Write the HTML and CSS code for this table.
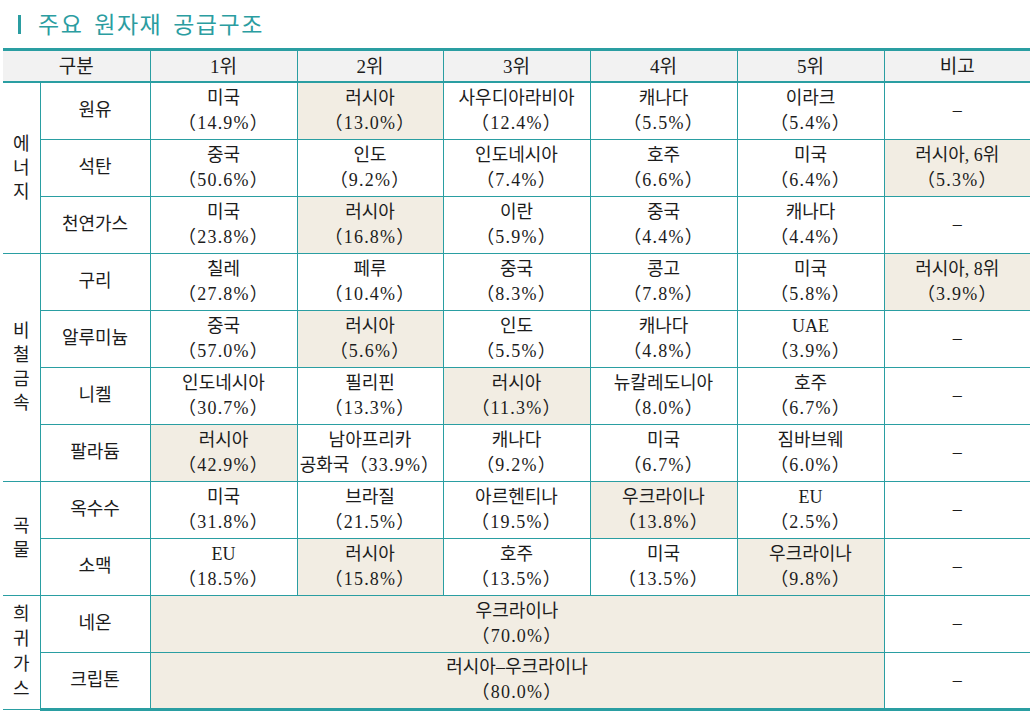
FILE: index.html
```html
<!DOCTYPE html>
<html lang="ko">
<head>
<meta charset="utf-8">
<title>주요 원자재 공급구조</title>
<link rel="stylesheet" href="styles.css">
</head>
<body>
<div class="title"><span class="bar"></span><span class="title-text">주요 원자재 공급구조</span></div>
<table class="supply">
  <colgroup>
    <col class="c-cat"><col class="c-item"><col class="c-rank"><col class="c-rank2"><col class="c-rank"><col class="c-rank"><col class="c-rank"><col class="c-note">
  </colgroup>
  <thead>
    <tr><th colspan="2">구분</th><th>1위</th><th>2위</th><th>3위</th><th>4위</th><th>5위</th><th class="last">비고</th></tr>
  </thead>
  <tbody>
    <tr>
      <td rowspan="3" class="cat">에<br>너<br>지</td>
      <td>원유</td>
      <td>미국<br><span class="pct">（14.9%）</span></td>
      <td class="hl">러시아<br><span class="pct">（13.0%）</span></td>
      <td>사우디아라비아<br><span class="pct">（12.4%）</span></td>
      <td>캐나다<br><span class="pct">（5.5%）</span></td>
      <td>이라크<br><span class="pct">（5.4%）</span></td>
      <td class="last">–</td>
    </tr>
    <tr>
      <td>석탄</td>
      <td>중국<br><span class="pct">（50.6%）</span></td>
      <td>인도<br><span class="pct">（9.2%）</span></td>
      <td>인도네시아<br><span class="pct">（7.4%）</span></td>
      <td>호주<br><span class="pct">（6.6%）</span></td>
      <td>미국<br><span class="pct">（6.4%）</span></td>
      <td class="last hl">러시아, 6위<br><span class="pct">（5.3%）</span></td>
    </tr>
    <tr>
      <td>천연가스</td>
      <td>미국<br><span class="pct">（23.8%）</span></td>
      <td class="hl">러시아<br><span class="pct">（16.8%）</span></td>
      <td>이란<br><span class="pct">（5.9%）</span></td>
      <td>중국<br><span class="pct">（4.4%）</span></td>
      <td>캐나다<br><span class="pct">（4.4%）</span></td>
      <td class="last">–</td>
    </tr>
    <tr>
      <td rowspan="4" class="cat">비<br>철<br>금<br>속</td>
      <td>구리</td>
      <td>칠레<br><span class="pct">（27.8%）</span></td>
      <td>페루<br><span class="pct">（10.4%）</span></td>
      <td>중국<br><span class="pct">（8.3%）</span></td>
      <td>콩고<br><span class="pct">（7.8%）</span></td>
      <td>미국<br><span class="pct">（5.8%）</span></td>
      <td class="last hl">러시아, 8위<br><span class="pct">（3.9%）</span></td>
    </tr>
    <tr>
      <td>알루미늄</td>
      <td>중국<br><span class="pct">（57.0%）</span></td>
      <td class="hl">러시아<br><span class="pct">（5.6%）</span></td>
      <td>인도<br><span class="pct">（5.5%）</span></td>
      <td>캐나다<br><span class="pct">（4.8%）</span></td>
      <td>UAE<br><span class="pct">（3.9%）</span></td>
      <td class="last">–</td>
    </tr>
    <tr>
      <td>니켈</td>
      <td>인도네시아<br><span class="pct">（30.7%）</span></td>
      <td>필리핀<br><span class="pct">（13.3%）</span></td>
      <td class="hl">러시아<br><span class="pct">（11.3%）</span></td>
      <td>뉴칼레도니아<br><span class="pct">（8.0%）</span></td>
      <td>호주<br><span class="pct">（6.7%）</span></td>
      <td class="last">–</td>
    </tr>
    <tr>
      <td>팔라듐</td>
      <td class="hl">러시아<br><span class="pct">（42.9%）</span></td>
      <td>남아프리카<br>공화국<span class="pct">（33.9%）</span></td>
      <td>캐나다<br><span class="pct">（9.2%）</span></td>
      <td>미국<br><span class="pct">（6.7%）</span></td>
      <td>짐바브웨<br><span class="pct">（6.0%）</span></td>
      <td class="last">–</td>
    </tr>
    <tr>
      <td rowspan="2" class="cat">곡<br>물</td>
      <td>옥수수</td>
      <td>미국<br><span class="pct">（31.8%）</span></td>
      <td>브라질<br><span class="pct">（21.5%）</span></td>
      <td>아르헨티나<br><span class="pct">（19.5%）</span></td>
      <td class="hl">우크라이나<br><span class="pct">（13.8%）</span></td>
      <td>EU<br><span class="pct">（2.5%）</span></td>
      <td class="last">–</td>
    </tr>
    <tr>
      <td>소맥</td>
      <td>EU<br><span class="pct">（18.5%）</span></td>
      <td class="hl">러시아<br><span class="pct">（15.8%）</span></td>
      <td>호주<br><span class="pct">（13.5%）</span></td>
      <td>미국<br><span class="pct">（13.5%）</span></td>
      <td class="hl">우크라이나<br><span class="pct">（9.8%）</span></td>
      <td class="last">–</td>
    </tr>
    <tr>
      <td rowspan="2" class="cat gas">희<br>귀<br>가<br>스</td>
      <td>네온</td>
      <td colspan="5" class="hl span-cell">우크라이나<br><span class="pct">（70.0%）</span></td>
      <td class="last">–</td>
    </tr>
    <tr class="final">
      <td>크립톤</td>
      <td colspan="5" class="hl span-cell">러시아–우크라이나<br><span class="pct">（80.0%）</span></td>
      <td class="last">–</td>
    </tr>
  </tbody>
</table>
</body>
</html>
```

FILE: styles.css
```css
html, body {
  margin: 0;
  padding: 0;
  background: #ffffff;
}

body {
  font-family: "Liberation Serif", "Noto Sans CJK KR", serif;
  color: #1c1c1c;
  width: 1033px;
}

.title {
  height: 48px;
  display: flex;
  align-items: center;
  padding-left: 18px;
  box-sizing: border-box;
}

.bar {
  display: inline-block;
  width: 3px;
  height: 19px;
  background: #2b9da1;
  margin-right: 17px;
  margin-top: 1px;
}

.title-text {
  font-family: "Noto Sans CJK KR", sans-serif;
  font-size: 23px;
  letter-spacing: 1.5px;
  word-spacing: 3px;
  color: #2b9da1;
  line-height: 1;
  margin-top: -1px;
}

.supply {
  border-collapse: collapse;
  table-layout: fixed;
  width: 1027px;
  margin-left: 3px;
  font-size: 18px;
  line-height: 25px;
}

.c-cat { width: 37px; }
.c-item { width: 110px; }
.c-rank { width: 147px; }
.c-rank2 { width: 146px; }
.c-note { width: 146px; }

.supply th,
.supply td {
  border: 1px solid #2a9ea2;
  text-align: center;
  vertical-align: middle;
  padding: 0;
  font-weight: normal;
  white-space: nowrap;
}

.supply th {
  background: #f2f2f2;
  height: 29px;
  border-top: 3px solid #2a9ea2;
  border-bottom: 2px solid #2a9ea2;
  padding-top: 1px;
  font-size: 19px;
}

.supply th:first-child,
.supply td.cat {
  border-left: none;
}

.supply .last {
  border-right: none;
}

.supply tbody tr {
  height: 57px;
}

.supply td.hl {
  background: #f2ede3;
}

.pct {
  letter-spacing: 1.2px;
}

.supply td.cat {
  line-height: 24px;
}

.supply td.gas {
  line-height: 25px;
}

.supply tr.final td {
  border-bottom: 3px solid #2a9ea2;
}
```
